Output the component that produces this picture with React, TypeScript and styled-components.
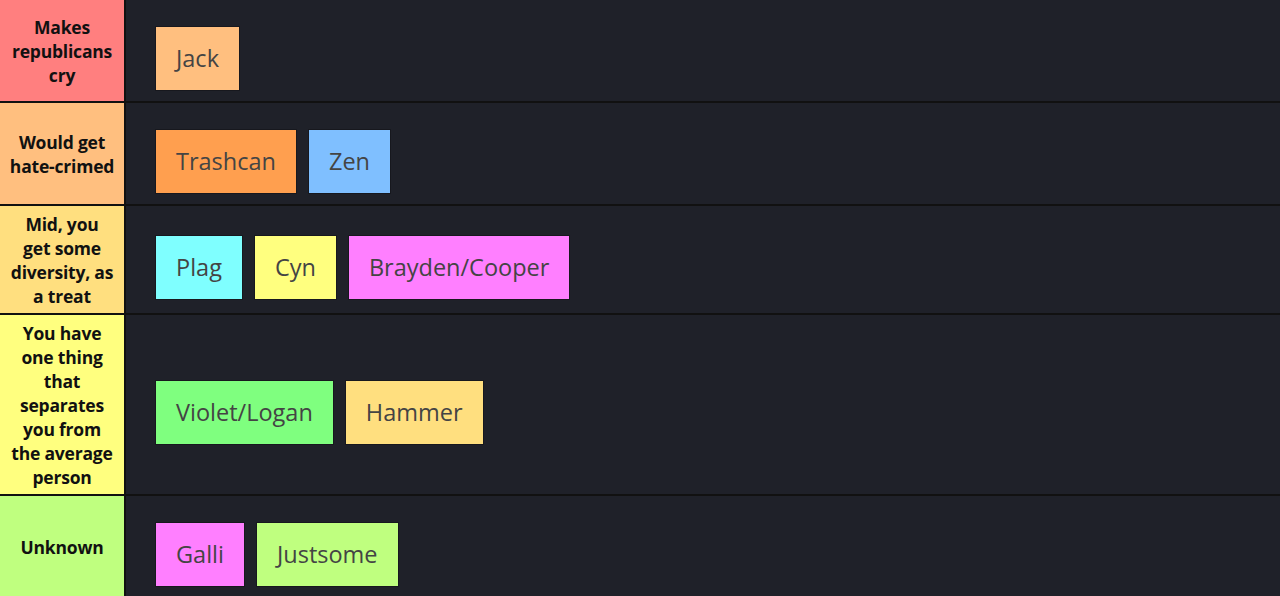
import styled, { createGlobalStyle } from 'styled-components'

/*
 * Types.
 */

interface Item {
  name: string
  color: string
}

interface Tier {
  label: string
  color: string
  items: Item[]
}

/*
 * Data.
 */

const tiers: Tier[] = [
  {
    label: 'Makes republicans cry',
    color: '#ff7f7f',
    items: [{ name: 'Jack', color: '#ffbf7f' }],
  },
  {
    // non-breaking hyphen keeps "hate-crimed" on one line
    label: 'Would get hate\u2011crimed',
    color: '#ffbf7f',
    items: [
      { name: 'Trashcan', color: '#ff9f4f' },
      { name: 'Zen', color: '#7fbfff' },
    ],
  },
  {
    label: 'Mid, you get some diversity, as a treat',
    color: '#ffdf7f',
    items: [
      { name: 'Plag', color: '#7fffff' },
      { name: 'Cyn', color: '#ffff7f' },
      { name: 'Brayden/Cooper', color: '#ff7fff' },
    ],
  },
  {
    label: 'You have one thing that separates you from the average person',
    color: '#ffff7f',
    items: [
      { name: 'Violet/Logan', color: '#7fff7f' },
      { name: 'Hammer', color: '#ffdf7f' },
    ],
  },
  {
    label: 'Unknown',
    color: '#bfff7f',
    items: [
      { name: 'Galli', color: '#ff7fff' },
      { name: 'Justsome', color: '#bfff7f' },
    ],
  },
]

/*
 * Styles.
 */

const GlobalStyle = createGlobalStyle`
  body {
    margin: 0;
    background: #1f2129;
    font-family: "Open Sans", "Noto Sans", sans-serif;
  }
`

const Board = styled.div`
  display: flex;
  flex-direction: column;
  width: 1280px;
  background: #1f2129;
`

const Row = styled.div`
  display: flex;
  border-bottom: 2px solid #111;

  &:last-child {
    border-bottom: none;
  }
`

const Label = styled.div<{ $color: string }>`
  box-sizing: border-box;
  width: 126px;
  min-height: 101px;
  flex-shrink: 0;
  display: flex;
  align-items: center;
  justify-content: center;
  padding: 6px 10px 5px;
  background: ${({ $color }) => $color};
  color: #111;
  font-size: 17.5px;
  font-weight: 700;
  line-height: 24px;
  letter-spacing: -0.2px;
  text-align: center;
  border-right: 2px solid #111;
`

const Items = styled.div`
  flex: 1;
  display: flex;
  flex-wrap: wrap;
  align-items: center;
  gap: 13px;
  padding: 15px 30px 0;
  background: #1f2129;
`

const Card = styled.div<{ $color: string }>`
  box-sizing: border-box;
  height: 63px;
  display: flex;
  align-items: center;
  padding: 0 20px;
  background: ${({ $color }) => $color};
  color: #444;
  font-size: 23.5px;
  box-shadow: 0 0 0 1px rgba(0, 0, 0, 0.25);
`

/*
 * Component.
 */

export default function App() {
  return (
    <>
      <GlobalStyle />
      <Board>
        {tiers.map((tier) => (
          <Row key={tier.label}>
            <Label $color={tier.color}>{tier.label}</Label>
            <Items>
              {tier.items.map((item) => (
                <Card key={item.name} $color={item.color}>
                  {item.name}
                </Card>
              ))}
            </Items>
          </Row>
        ))}
      </Board>
    </>
  )
}
